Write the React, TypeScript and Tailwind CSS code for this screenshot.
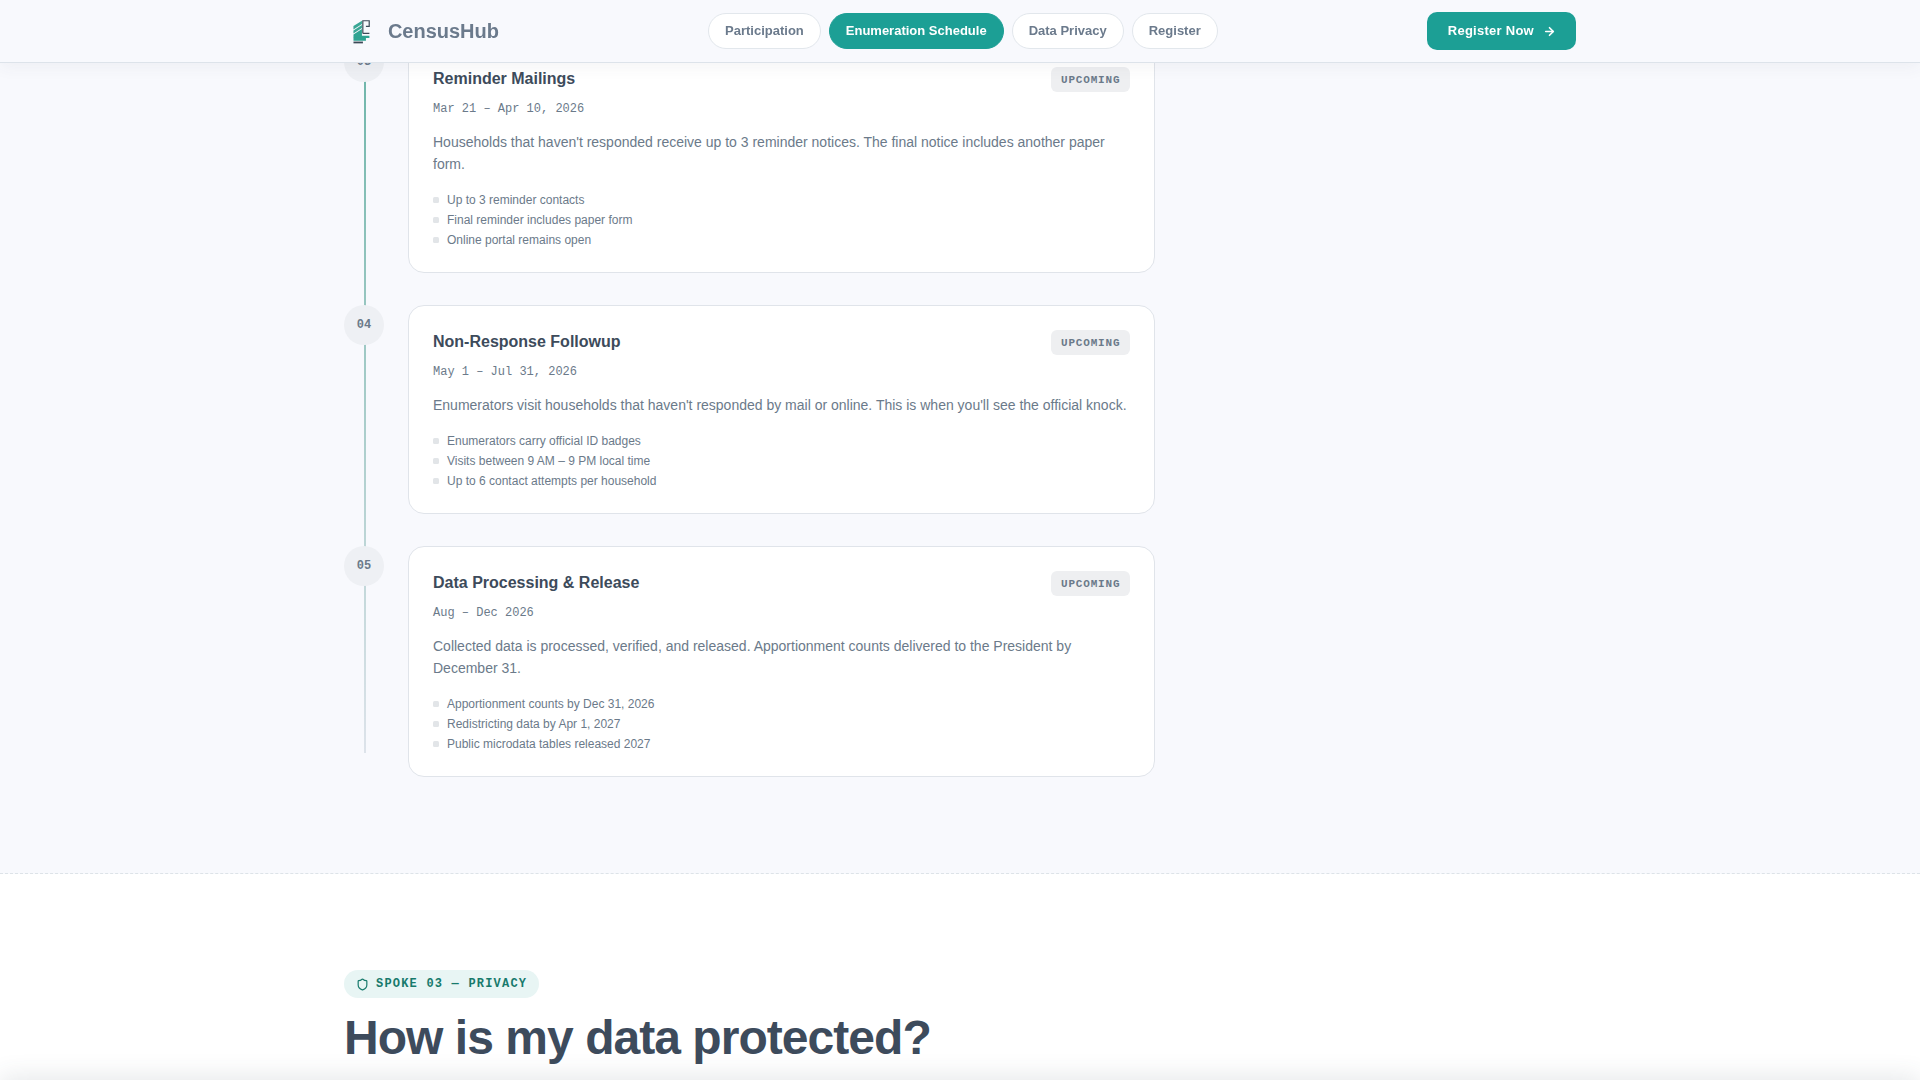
import { ArrowRight, Shield } from 'lucide-react';

const navItems = ['Participation', 'Enumeration Schedule', 'Data Privacy', 'Register'];

const phases = [
  {
    step: '03',
    title: 'Reminder Mailings',
    dates: 'Mar 21 – Apr 10, 2026',
    text: "Households that haven't responded receive up to 3 reminder notices. The final notice includes another paper form.",
    points: ['Up to 3 reminder contacts', 'Final reminder includes paper form', 'Online portal remains open'],
  },
  {
    step: '04',
    title: 'Non-Response Followup',
    dates: 'May 1 – Jul 31, 2026',
    text: "Enumerators visit households that haven't responded by mail or online. This is when you'll see the official knock.",
    points: ['Enumerators carry official ID badges', 'Visits between 9 AM – 9 PM local time', 'Up to 6 contact attempts per household'],
  },
  {
    step: '05',
    title: 'Data Processing & Release',
    dates: 'Aug – Dec 2026',
    text: 'Collected data is processed, verified, and released. Apportionment counts delivered to the President by December 31.',
    points: ['Apportionment counts by Dec 31, 2026', 'Redistricting data by Apr 1, 2027', 'Public microdata tables released 2027'],
  },
];

function Logo() {
  return (
    <svg viewBox="0 0 36 36" className="h-9 w-9" fill="none">
      <path d="M9.5 13 L18 7.6 V10.9 L9.5 16.4 Z" fill="#3aa795" />
      <path d="M9.5 17.4 L18 11.9 V15 L9.5 20.6 Z" fill="#3aa795" />
      <path d="M9.5 21.5 L18 16 V22.8 H25.5 V25 H9.5 Z" fill="#2fa391" />
      <path d="M9.5 24.8 H22 V27.8 H9.5 Z" fill="#2fa391" />
      <path d="M9.5 28.6 H19 V30.4 H9.5 Z" fill="#3c4a57" />
      <path d="M18.9 20.4 V7.7 H25.3 V13.4 H22 M18.9 20.4 H25.5" stroke="#3c4a57" strokeWidth="1.2" />
    </svg>
  );
}

function Header() {
  return (
    <header className="fixed inset-x-0 top-0 z-50 border-b border-[#dde3ea] bg-[#f8f9fd] shadow-[0_4px_16px_rgba(60,75,90,0.06)]">
      <div className="mx-auto flex h-[62px] max-w-7xl items-center justify-between px-6">
        <a href="#" className="flex w-[155px] items-center gap-2">
          <Logo />
          <span className="text-xl font-bold text-[#6b7a8c]">CensusHub</span>
        </a>
        <nav className="flex gap-2">
          {navItems.map((item) => (
            <a
              key={item}
              href="#"
              className={
                item === 'Enumeration Schedule'
                  ? 'rounded-full border border-[#1c9f95] bg-[#1c9f95] px-4 py-2 text-[13px] leading-[18px] font-semibold text-white'
                  : 'rounded-full border border-[#e2e7ec] bg-white px-4 py-2 text-[13px] leading-[18px] font-semibold text-[#6b7a8c]'
              }
            >
              {item}
            </a>
          ))}
        </nav>
        <a href="#" className="flex h-[38px] items-center gap-[9px] rounded-[10px] bg-[#1c9f95] pr-5 pl-[21px] text-[13px] font-semibold tracking-[0.02em] text-white">
          Register Now
          <ArrowRight size={13} strokeWidth={3} />
        </a>
      </div>
    </header>
  );
}

function App() {
  return (
    <div className="h-[1080px] overflow-hidden bg-white font-['Liberation_Sans',Arial,sans-serif] text-[#6b7a8a]">
      <Header />

      <section className="border-b border-dashed border-[#dde3e8] bg-[#f8f9fd] pt-[42px] pb-24">
        <div className="mx-auto max-w-7xl px-6">
          <div className="relative w-[811px]">
            {/* Connector running behind the step circles */}
            <div className="absolute -top-[500px] bottom-6 left-5 w-0.5 bg-linear-to-b from-[#1c9f8c] from-15% to-[#dde3ea]" />
            <div className="flex flex-col gap-8">
              {phases.map((phase) => (
                <div key={phase.step} className="relative flex gap-6">
                  <div className="flex h-10 w-10 shrink-0 items-center justify-center rounded-full bg-[#eef0f4] font-['Liberation_Mono',monospace] text-xs font-bold">
                    {phase.step}
                  </div>
                  <article className="flex-1 rounded-2xl border border-[#e0e4ea] bg-white p-6">
                    <div className="mb-2 flex items-start justify-between">
                      <h3 className="text-base leading-6 font-bold text-[#3d4b5b]">{phase.title}</h3>
                      <span className="rounded-md bg-[#eeeff1] px-[9.6px] pt-[4.5px] pb-[3.5px] font-['Liberation_Mono',monospace] text-[11px] leading-[17.2px] font-bold tracking-[0.075em]">
                        UPCOMING
                      </span>
                    </div>
                    <p className="mb-[11.5px] font-['Liberation_Mono',monospace] text-xs leading-[19.2px]">{phase.dates}</p>
                    <p className="mb-[16.5px] text-sm leading-[22.4px]">{phase.text}</p>
                    <ul className="space-y-1">
                      {phase.points.map((point) => (
                        <li key={point} className="flex items-center gap-2 text-xs leading-4">
                          <span className="h-1.5 w-1.5 rounded-[1.5px] bg-[#e2e5e8]" />
                          {point}
                        </li>
                      ))}
                    </ul>
                  </article>
                </div>
              ))}
            </div>
          </div>
        </div>
      </section>

      <section className="bg-white pt-24">
        <div className="mx-auto max-w-7xl px-6">
          <div className="mb-[14.5px] flex">
            <span className="flex h-[27.5px] items-center gap-[7px] rounded-full bg-[#e8f5f4] pr-[11.5px] pl-3 font-['Liberation_Mono',monospace] text-xs font-bold tracking-[0.1em] text-[#177a6c]">
              <Shield size={13} strokeWidth={2.2} />
              SPOKE 03 — PRIVACY
            </span>
          </div>
          <h2 className="text-5xl leading-[1.1] font-bold tracking-[-0.02em] text-[#3d4b5c]">How is my data protected?</h2>
        </div>
      </section>

      {/* Action bar parked just under the viewport, only its shadow shows */}
      <div className="fixed inset-x-0 top-full h-16 bg-white shadow-[0_-4px_24px_rgba(60,75,90,0.12)]" />
    </div>
  );
}

export default App;
